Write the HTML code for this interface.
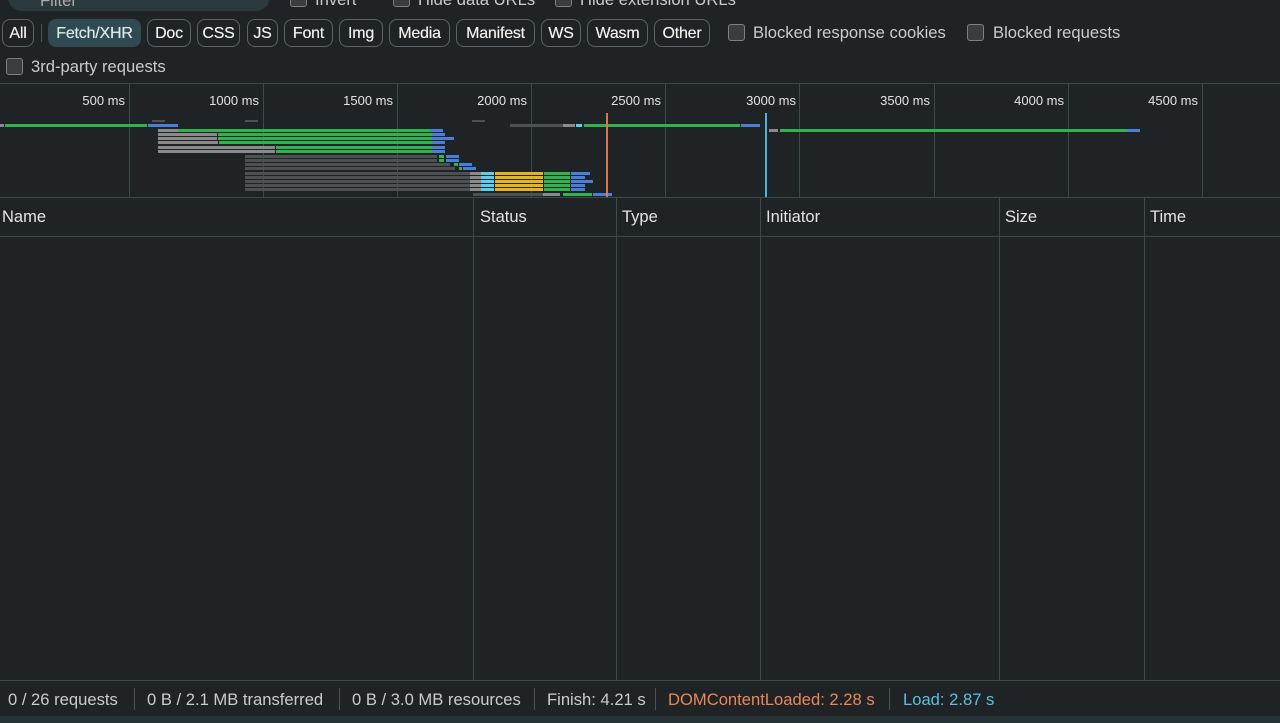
<!DOCTYPE html>
<html><head><style>
*{margin:0;padding:0;box-sizing:border-box}
body{width:1280px;height:723px;background:#202325;font-family:"Liberation Sans",sans-serif;color:#e3e3e3;position:relative;overflow:hidden;font-size:16px}
.a{position:absolute}
.btn{position:absolute;top:19px;height:28px;border:1px solid #5a6466;border-radius:8px;font-size:16px;line-height:28px;text-align:center;color:#eef0f0;letter-spacing:-0.2px;text-shadow:0 0 0.4px #fff}
.cb{position:absolute;width:17px;height:17px;border:1px solid #7a8284;border-radius:3px;background:#3a3d3f}
.t{position:absolute;font-size:16.6px;color:#c9cccd;white-space:nowrap}
.g{position:absolute;top:84px;height:113px;width:1px;background:#3b4a4b}
.lbl{position:absolute;top:93px;font-size:13px;color:#e3e3e3;text-align:right;width:70px}
.b{position:absolute;height:3px}
.gr{background:#2fb34f}.bl{background:#4a7fd8}.gy{background:#8a8a8a}.dk{background:#4e5153}.cy{background:#5ccfee}.ye{background:#e6b422}
.cd{position:absolute;top:198px;height:482px;width:1px;background:#3b4a4b}
.h{position:absolute;top:208px;font-size:16.5px;color:#e3e3e3}
.f{position:absolute;top:690px;font-size:16.6px;color:#c9cccd;white-space:nowrap}
.fs{position:absolute;top:688px;width:1px;height:22px;background:#4a5455}
</style></head><body>
<div class="a" style="left:8px;top:-20px;width:262px;height:31px;background:#2b3a3c;border-radius:14px"></div>
<div class="t" style="left:40px;top:-9px;color:#aaa">Filter</div>
<div class="cb" style="left:290px;top:-10px"></div><div class="t" style="left:315px;top:-10px">Invert</div>
<div class="cb" style="left:393px;top:-10px"></div><div class="t" style="left:418px;top:-10px">Hide data URLs</div>
<div class="cb" style="left:555px;top:-10px"></div><div class="t" style="left:580px;top:-10px">Hide extension URLs</div>

<div class="btn" style="left:2px;width:32px">All</div>
<div class="a" style="left:41px;top:24px;width:1px;height:18px;background:#4a5455"></div>
<div class="btn" style="left:48px;width:93px;background:#2f4a50;border-color:#2f4a50;color:#dbe8ea">Fetch/XHR</div>
<div class="btn" style="left:147px;width:44px">Doc</div>
<div class="btn" style="left:197px;width:43px">CSS</div>
<div class="btn" style="left:247px;width:31px">JS</div>
<div class="btn" style="left:284px;width:49px">Font</div>
<div class="btn" style="left:339px;width:44px">Img</div>
<div class="btn" style="left:389px;width:61px">Media</div>
<div class="btn" style="left:456px;width:79px">Manifest</div>
<div class="btn" style="left:541px;width:40px">WS</div>
<div class="btn" style="left:587px;width:61px">Wasm</div>
<div class="btn" style="left:654px;width:56px">Other</div>
<div class="cb" style="left:728px;top:24px"></div><div class="t" style="left:753px;top:23px">Blocked response cookies</div>
<div class="cb" style="left:967px;top:24px"></div><div class="t" style="left:993px;top:23px">Blocked requests</div>
<div class="cb" style="left:6px;top:58px"></div><div class="t" style="left:31px;top:57px">3rd-party requests</div>

<div class="a" style="left:0;top:83px;width:1280px;height:1px;background:#3b4a4b"></div>
<div class="a" style="left:0;top:197px;width:1280px;height:1px;background:#3b4a4b"></div>
<div class="a" style="left:0;top:236px;width:1280px;height:1px;background:#3b4a4b"></div>
<div class="g" style="left:129px"></div><div class="g" style="left:263px"></div><div class="g" style="left:397px"></div><div class="g" style="left:531px"></div><div class="g" style="left:665px"></div><div class="g" style="left:799px"></div><div class="g" style="left:934px"></div><div class="g" style="left:1068px"></div><div class="g" style="left:1202px"></div>
<div class="lbl" style="left:55px">500 ms</div><div class="lbl" style="left:189px">1000 ms</div><div class="lbl" style="left:323px">1500 ms</div><div class="lbl" style="left:457px">2000 ms</div><div class="lbl" style="left:591px">2500 ms</div><div class="lbl" style="left:726px">3000 ms</div><div class="lbl" style="left:860px">3500 ms</div><div class="lbl" style="left:994px">4000 ms</div><div class="lbl" style="left:1128px">4500 ms</div>

<div class="b dk" style="left:152px;top:120px;width:13px;height:2px"></div>
<div class="b dk" style="left:245px;top:120px;width:13px;height:2px"></div>
<div class="b dk" style="left:472px;top:120px;width:13px;height:2px"></div>
<div class="b gy" style="left:0;top:124px;width:4px"></div><div class="b gr" style="left:5px;top:124px;width:142px"></div><div class="b bl" style="left:148px;top:124px;width:30px"></div>
<div class="b gy" style="left:158px;top:129px;width:20px"></div><div class="b gr" style="left:178px;top:129px;width:252px"></div><div class="b bl" style="left:430px;top:129px;width:13px"></div>
<div class="b gy" style="left:158px;top:133px;width:59px"></div><div class="b gr" style="left:218px;top:133px;width:214px"></div><div class="b bl" style="left:432px;top:133px;width:13px"></div>
<div class="b gy" style="left:158px;top:137px;width:59px"></div><div class="b gr" style="left:218px;top:137px;width:214px"></div><div class="b bl" style="left:432px;top:137px;width:22px"></div>
<div class="b gy" style="left:158px;top:141px;width:60px"></div><div class="b gr" style="left:219px;top:141px;width:213px"></div><div class="b bl" style="left:432px;top:141px;width:13px"></div>
<div class="b gy" style="left:158px;top:146px;width:117px"></div><div class="b gr" style="left:276px;top:146px;width:156px"></div><div class="b bl" style="left:432px;top:146px;width:13px"></div>
<div class="b gy" style="left:158px;top:150px;width:117px"></div><div class="b gr" style="left:276px;top:150px;width:156px"></div><div class="b bl" style="left:432px;top:150px;width:13px"></div>
<div class="b dk" style="left:245px;top:155px;width:192px"></div><div class="b gr" style="left:439px;top:155px;width:5px"></div><div class="b bl" style="left:446px;top:155px;width:13px"></div>
<div class="b dk" style="left:245px;top:159px;width:192px"></div><div class="b gr" style="left:439px;top:159px;width:5px"></div><div class="b bl" style="left:446px;top:159px;width:13px"></div>
<div class="b dk" style="left:245px;top:163px;width:205px"></div><div class="b gr" style="left:454px;top:163px;width:4px"></div><div class="b bl" style="left:459px;top:163px;width:13px"></div>
<div class="b dk" style="left:245px;top:167px;width:210px"></div><div class="b gr" style="left:459px;top:167px;width:3px"></div><div class="b bl" style="left:463px;top:167px;width:13px"></div>
<div class="b dk" style="left:245px;top:172px;width:225px"></div><div class="b gy" style="left:470px;top:172px;width:11px"></div><div class="b cy" style="left:481px;top:172px;width:13px"></div><div class="b ye" style="left:495px;top:172px;width:48px"></div><div class="b gr" style="left:544px;top:172px;width:26px"></div><div class="b bl" style="left:571px;top:172px;width:19px"></div>
<div class="b dk" style="left:245px;top:176px;width:225px"></div><div class="b gy" style="left:470px;top:176px;width:11px"></div><div class="b cy" style="left:481px;top:176px;width:13px"></div><div class="b ye" style="left:495px;top:176px;width:48px"></div><div class="b gr" style="left:544px;top:176px;width:26px"></div><div class="b bl" style="left:571px;top:176px;width:14px"></div>
<div class="b dk" style="left:245px;top:180px;width:225px"></div><div class="b gy" style="left:470px;top:180px;width:11px"></div><div class="b cy" style="left:481px;top:180px;width:13px"></div><div class="b ye" style="left:495px;top:180px;width:48px"></div><div class="b gr" style="left:544px;top:180px;width:26px"></div><div class="b bl" style="left:571px;top:180px;width:22px"></div>
<div class="b dk" style="left:245px;top:184px;width:225px"></div><div class="b gy" style="left:470px;top:184px;width:11px"></div><div class="b cy" style="left:481px;top:184px;width:13px"></div><div class="b ye" style="left:495px;top:184px;width:48px"></div><div class="b gr" style="left:544px;top:184px;width:26px"></div><div class="b bl" style="left:571px;top:184px;width:14px"></div>
<div class="b dk" style="left:245px;top:188px;width:225px"></div><div class="b gy" style="left:470px;top:188px;width:11px"></div><div class="b cy" style="left:481px;top:188px;width:13px"></div><div class="b ye" style="left:495px;top:188px;width:48px"></div><div class="b gr" style="left:544px;top:188px;width:26px"></div><div class="b bl" style="left:571px;top:188px;width:14px"></div>
<div class="b dk" style="left:473px;top:193px;width:70px"></div><div class="b gy" style="left:543px;top:193px;width:17px"></div><div class="b gr" style="left:563px;top:193px;width:29px"></div><div class="b bl" style="left:593px;top:193px;width:19px"></div>
<div class="b dk" style="left:510px;top:124px;width:53px"></div><div class="b gy" style="left:563px;top:124px;width:12px"></div><div class="b cy" style="left:576px;top:124px;width:6px"></div><div class="b gr" style="left:584px;top:124px;width:156px"></div><div class="b bl" style="left:741px;top:124px;width:19px"></div>
<div class="b gy" style="left:769px;top:129px;width:9px"></div><div class="b gr" style="left:780px;top:129px;width:347px"></div><div class="b bl" style="left:1127px;top:129px;width:13px"></div>
<div class="a" style="left:606px;top:113px;width:2px;height:84px;background:#d9784e"></div>
<div class="a" style="left:765px;top:113px;width:2px;height:84px;background:#4fb3d9"></div>

<div class="cd" style="left:473px"></div><div class="cd" style="left:616px"></div><div class="cd" style="left:760px"></div><div class="cd" style="left:999px"></div><div class="cd" style="left:1144px"></div>
<div class="h" style="left:2px">Name</div><div class="h" style="left:480px">Status</div><div class="h" style="left:622px">Type</div><div class="h" style="left:766px">Initiator</div><div class="h" style="left:1005px">Size</div><div class="h" style="left:1150px">Time</div>

<div class="a" style="left:0;top:680px;width:1280px;height:1px;background:#3b4a4b"></div>
<div class="f" style="left:8px">0 / 26 requests</div><div class="fs" style="left:134px"></div>
<div class="f" style="left:147px">0 B / 2.1 MB transferred</div><div class="fs" style="left:339px"></div>
<div class="f" style="left:352px">0 B / 3.0 MB resources</div><div class="fs" style="left:534px"></div>
<div class="f" style="left:547px">Finish: 4.21 s</div><div class="fs" style="left:655px"></div>
<div class="f" style="left:668px;color:#e8875a">DOMContentLoaded: 2.28 s</div><div class="fs" style="left:889px"></div>
<div class="f" style="left:903px;color:#5cbfe0">Load: 2.87 s</div>
<div class="a" style="left:0;top:716px;width:1280px;height:7px;background:#263336"></div>
</body></html>
